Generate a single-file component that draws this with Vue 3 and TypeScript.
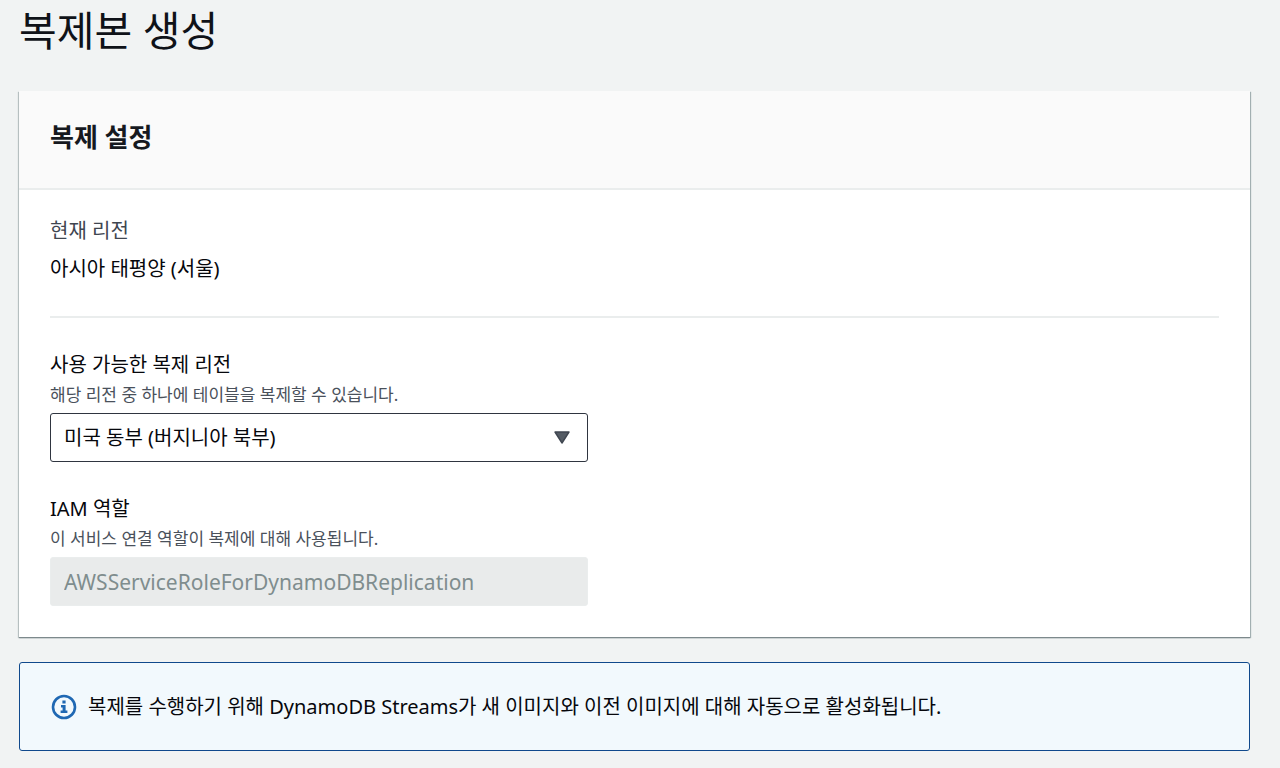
<script setup lang="ts">
import { ref } from 'vue'

const regions: { value: string; label: string }[] = [
  { value: 'us-east-1', label: '미국 동부 (버지니아 북부)' },
]
const selectedRegion = ref<string>('us-east-1')
const roleName = ref<string>('AWSServiceRoleForDynamoDBReplication')
</script>

<template>
  <main class="page">
    <h1 class="title">복제본 생성</h1>

    <section class="card">
      <header class="card-header">
        <h2>복제 설정</h2>
      </header>
      <div class="card-body">
        <dl class="current">
          <dt>현재 리전</dt>
          <dd>아시아 태평양 (서울)</dd>
        </dl>

        <div class="field">
          <label for="region">사용 가능한 복제 리전</label>
          <p id="region-hint" class="hint">해당 리전 중 하나에 테이블을 복제할 수 있습니다.</p>
          <div class="select-wrap">
            <select id="region" v-model="selectedRegion" class="control" aria-describedby="region-hint">
              <option v-for="r in regions" :key="r.value" :value="r.value">{{ r.label }}</option>
            </select>
            <svg class="caret" width="16" height="13" viewBox="0 0 16 13" aria-hidden="true">
              <path d="M1 1H15L8 12Z" fill="#545b64" stroke="#3f4650" stroke-width="1.4" stroke-linejoin="round" />
            </svg>
          </div>
        </div>

        <div class="field">
          <label for="role">IAM 역할</label>
          <p id="role-hint" class="hint">이 서비스 연결 역할이 복제에 대해 사용됩니다.</p>
          <input id="role" v-model="roleName" class="control" type="text" disabled aria-describedby="role-hint" />
        </div>
      </div>
    </section>

    <div class="alert" role="status">
      <svg class="info" width="26" height="26" viewBox="0 0 26 26" aria-hidden="true">
        <circle cx="13" cy="13" r="11" fill="none" stroke="#1f68b3" stroke-width="2.6" />
        <path d="M11.4 6.6H14.6V9.4H11.4ZM10 11H14.6V16.6H16.4V19H9.6V16.6H11.6V13.4H10Z" fill="#1f68b3" />
      </svg>
      <p>복제를 수행하기 위해 DynamoDB Streams가 새 이미지와 이전 이미지에 대해 자동으로 활성화됩니다.</p>
    </div>
  </main>
</template>

<style>
body {
  margin: 0;
  background: #f1f3f3;
}
</style>

<style scoped>
.page {
  padding: 0 30px 17px 19px;
  font-family: 'Noto Sans', 'Noto Sans CJK KR', sans-serif;
  font-size: 20px;
  line-height: 32px;
  color: #06070c;
}

h1,
h2,
p,
dl,
dd {
  margin: 0;
}

.title {
  padding-bottom: 31px;
  font-size: 41px;
  font-weight: 400;
  line-height: 60px;
  color: #0f1218;
}

.card {
  background: #fff;
  box-shadow: 0 1px 1px #7d898c, 1px 1px 1px #aab7b8, -1px 1px 1px #c2cbcb;
}

.card-header {
  padding: 28px 31px 33px;
  border-bottom: 2px solid #eaeded;
  background: #fafafa;
}

.card-header h2 {
  font-size: 26px;
  font-weight: 700;
  line-height: 36px;
  color: #16191f;
}

.card-body {
  padding: 25px 31px 31px;
}

.current {
  padding-bottom: 31px;
  border-bottom: 2px solid #eaeded;
}

.current dt {
  padding-bottom: 6px;
  color: #3f4650;
}

.field {
  width: 46%;
  padding-top: 31px;
}

.field label {
  display: block;
}

.hint {
  padding-bottom: 4px;
  font-size: 17px;
  line-height: 28px;
  color: #4a515b;
}

.select-wrap {
  position: relative;
}

.control {
  display: block;
  box-sizing: border-box;
  width: 100%;
  height: 49px;
  padding: 0 13px;
  border: 1px solid #2f3540;
  border-radius: 3px;
  background: #fff;
  font: inherit;
  color: inherit;
  appearance: none;
}

.control:disabled {
  border-color: #eaeded;
  background: #e9ebeb;
  font-size: 21px;
  color: #7f8d8e;
  opacity: 1;
}

.caret {
  position: absolute;
  top: 18px;
  right: 18px;
  pointer-events: none;
}

.alert {
  display: flex;
  align-items: center;
  gap: 11px;
  margin-top: 25px;
  padding: 28px 31px 27px;
  border: 1px solid #10498c;
  border-radius: 3px;
  background: #f2f9fd;
}

.info {
  flex: none;
}
</style>
